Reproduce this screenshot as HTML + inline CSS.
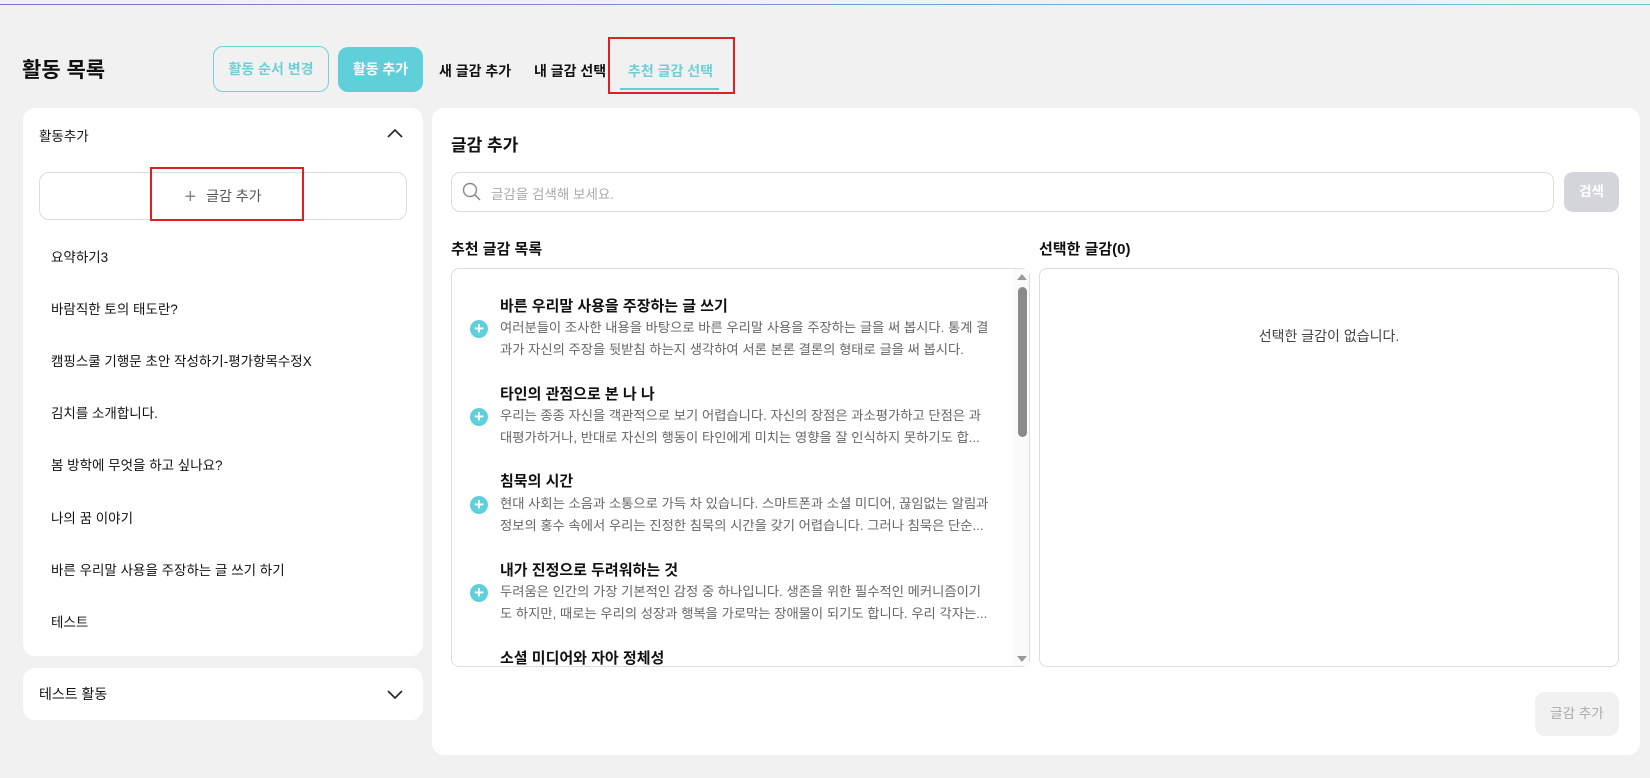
<!DOCTYPE html>
<html><head><meta charset="utf-8"><style>
*{box-sizing:border-box;margin:0;padding:0}
body{width:1650px;height:778px;background:#f0f1f0;font-family:"Liberation Sans","Noto Sans CJK KR",sans-serif;color:#111;position:relative;overflow:hidden}
.a{position:absolute}
.topline{left:0;top:4px;width:1650px;height:1px;background:linear-gradient(90deg,#8a6ad8,#5fcfd6)}
.panel{background:#fff;border-radius:12px}
.t{white-space:nowrap}
.li{position:absolute;left:28px;font-size:13.5px;line-height:18px}
.it .ti{position:absolute;left:500px;font-size:15px;font-weight:bold;line-height:20px;white-space:nowrap}
.it .d{position:absolute;left:500px;width:498px;font-size:13.3px;color:#666;line-height:22px;white-space:nowrap;overflow:hidden}
.plus{position:absolute;left:470px;width:18px;height:18px;border-radius:50%;background:#5fd0d9;color:#fff;font-size:17px;line-height:17px;text-align:center;font-weight:bold}
</style></head><body>
<div class="a topline"></div>
<div class="a t" style="left:22px;top:54px;font-size:21px;font-weight:bold">활동 목록</div>
<div class="a t" style="left:213px;top:46px;width:116px;height:46px;border:1px solid #6fd3da;border-radius:10px;color:#6fcfd6;font-size:14px;font-weight:bold;text-align:center;line-height:44px">활동 순서 변경</div>
<div class="a t" style="left:338px;top:47px;width:85px;height:45px;background:#5fd0d9;border-radius:10px;color:#fff;font-size:14px;font-weight:bold;text-align:center;line-height:45px">활동 추가</div>
<div class="a t" style="left:439px;top:61px;font-size:14px;font-weight:bold">새 글감 추가</div>
<div class="a t" style="left:534px;top:61px;font-size:14px;font-weight:bold">내 글감 선택</div>
<div class="a t" style="left:628px;top:61px;font-size:14px;font-weight:bold;color:#6fcfd6">추천 글감 선택</div>
<div class="a" style="left:620px;top:88px;width:99px;height:2px;background:#5fd0d9"></div>
<div class="a" style="left:608px;top:37px;width:127px;height:57px;border:2px solid #e02020"></div>

<div class="a panel" style="left:23px;top:108px;width:400px;height:548px">
 <div class="a t" style="left:16px;top:17px;font-size:13.5px">활동추가</div>
 <svg class="a" style="left:364px;top:20px" width="16" height="10"><path d="M1 9L8 2L15 9" fill="none" stroke="#222" stroke-width="1.6"/></svg>
 <div class="a" style="left:16px;top:64px;width:368px;height:48px;border:1px solid #ddd;border-radius:10px;text-align:center;line-height:46px;font-size:14px;color:#555"><span style="font-size:20px;color:#888;vertical-align:-2px;margin-right:10px">+</span>글감 추가</div>
 <div class="li" style="top:141px">요약하기3</div>
 <div class="li" style="top:193px">바람직한 토의 태도란?</div>
 <div class="li" style="top:245px">캠핑스쿨 기행문 초안 작성하기-평가항목수정X</div>
 <div class="li" style="top:297px">김치를 소개합니다.</div>
 <div class="li" style="top:349px">봄 방학에 무엇을 하고 싶나요?</div>
 <div class="li" style="top:402px">나의 꿈 이야기</div>
 <div class="li" style="top:454px">바른 우리말 사용을 주장하는 글 쓰기 하기</div>
 <div class="li" style="top:506px">테스트</div>
</div>
<div class="a" style="left:150px;top:167px;width:154px;height:54px;border:2px solid #e02020"></div>
<div class="a panel" style="left:23px;top:668px;width:400px;height:52px">
 <div class="a t" style="left:16px;top:16px;font-size:14px">테스트 활동</div>
 <svg class="a" style="left:364px;top:22px" width="16" height="10"><path d="M1 1L8 8L15 1" fill="none" stroke="#222" stroke-width="1.6"/></svg>
</div>

<div class="a panel" style="left:432px;top:108px;width:1208px;height:647px"></div>
<div class="a t" style="left:451px;top:131px;font-size:17px;font-weight:bold">글감 추가</div>
<div class="a" style="left:451px;top:172px;width:1103px;height:40px;border:1px solid #ddd;border-radius:9px;background:#fff"></div>
<svg class="a" style="left:462px;top:182px" width="20" height="20"><circle cx="8" cy="8" r="6.5" fill="none" stroke="#888" stroke-width="1.4"/><path d="M13 13L18 18" stroke="#888" stroke-width="1.5"/></svg>
<div class="a t" style="left:491px;top:183px;font-size:13.5px;color:#aaa">글감을 검색해 보세요.</div>
<div class="a" style="left:1564px;top:172px;width:55px;height:40px;background:#d4d6db;border-radius:9px;color:#fff;font-size:13.5px;font-weight:bold;text-align:center;line-height:40px">검색</div>
<div class="a t" style="left:451px;top:238px;font-size:15px;font-weight:bold">추천 글감 목록</div>
<div class="a t" style="left:1039px;top:238px;font-size:15px;font-weight:bold">선택한 글감(0)</div>
<div class="a" style="left:451px;top:268px;width:579px;height:399px;border:1px solid #ddd;border-radius:8px;background:#fff"></div>
<div class="a" style="left:1014px;top:269px;width:15px;height:397px;background:#fafafa"></div>
<svg class="a" style="left:1016px;top:273px" width="12" height="8"><path d="M1 7L6 1L11 7Z" fill="#999"/></svg>
<svg class="a" style="left:1016px;top:655px" width="12" height="8"><path d="M1 1L6 7L11 1Z" fill="#999"/></svg>
<div class="a" style="left:1018px;top:287px;width:9px;height:150px;background:#8a8a8a;border-radius:5px"></div>
<div class="a" style="left:1039px;top:268px;width:580px;height:399px;border:1px solid #ddd;border-radius:8px;background:#fff"></div>
<div class="a t" style="left:1039px;top:326px;width:580px;text-align:center;font-size:14px;color:#444">선택한 글감이 없습니다.</div>
<div class="a" style="left:1535px;top:692px;width:84px;height:44px;background:#f0f1f0;border-radius:10px;color:#aaa;font-size:13.5px;text-align:center;line-height:44px">글감 추가</div>

<div class="it">
 <div class="ti" style="top:297px">바른 우리말 사용을 주장하는 글 쓰기</div>
 <div class="plus" style="top:320px">+</div>
 <div class="d" style="top:317px">여러분들이 조사한 내용을 바탕으로 바른 우리말 사용을 주장하는 글을 써 봅시다. 통계 결</div>
 <div class="d" style="top:339px">과가 자신의 주장을 뒷받침 하는지 생각하여 서론 본론 결론의 형태로 글을 써 봅시다.</div>
</div>
<div class="it">
 <div class="ti" style="top:385px">타인의 관점으로 본 나 나</div>
 <div class="plus" style="top:408px">+</div>
 <div class="d" style="top:405px">우리는 종종 자신을 객관적으로 보기 어렵습니다. 자신의 장점은 과소평가하고 단점은 과</div>
 <div class="d" style="top:427px">대평가하거나, 반대로 자신의 행동이 타인에게 미치는 영향을 잘 인식하지 못하기도 합...</div>
</div>
<div class="it">
 <div class="ti" style="top:472px">침묵의 시간</div>
 <div class="plus" style="top:496px">+</div>
 <div class="d" style="top:493px">현대 사회는 소음과 소통으로 가득 차 있습니다. 스마트폰과 소셜 미디어, 끊임없는 알림과</div>
 <div class="d" style="top:515px">정보의 홍수 속에서 우리는 진정한 침묵의 시간을 갖기 어렵습니다. 그러나 침묵은 단순...</div>
</div>
<div class="it">
 <div class="ti" style="top:561px">내가 진정으로 두려워하는 것</div>
 <div class="plus" style="top:584px">+</div>
 <div class="d" style="top:581px">두려움은 인간의 가장 기본적인 감정 중 하나입니다. 생존을 위한 필수적인 메커니즘이기</div>
 <div class="d" style="top:603px">도 하지만, 때로는 우리의 성장과 행복을 가로막는 장애물이 되기도 합니다. 우리 각자는...</div>
</div>
<div class="it"><div class="ti" style="top:649px;height:16px;overflow:hidden">소셜 미디어와 자아 정체성</div></div>
</body></html>
